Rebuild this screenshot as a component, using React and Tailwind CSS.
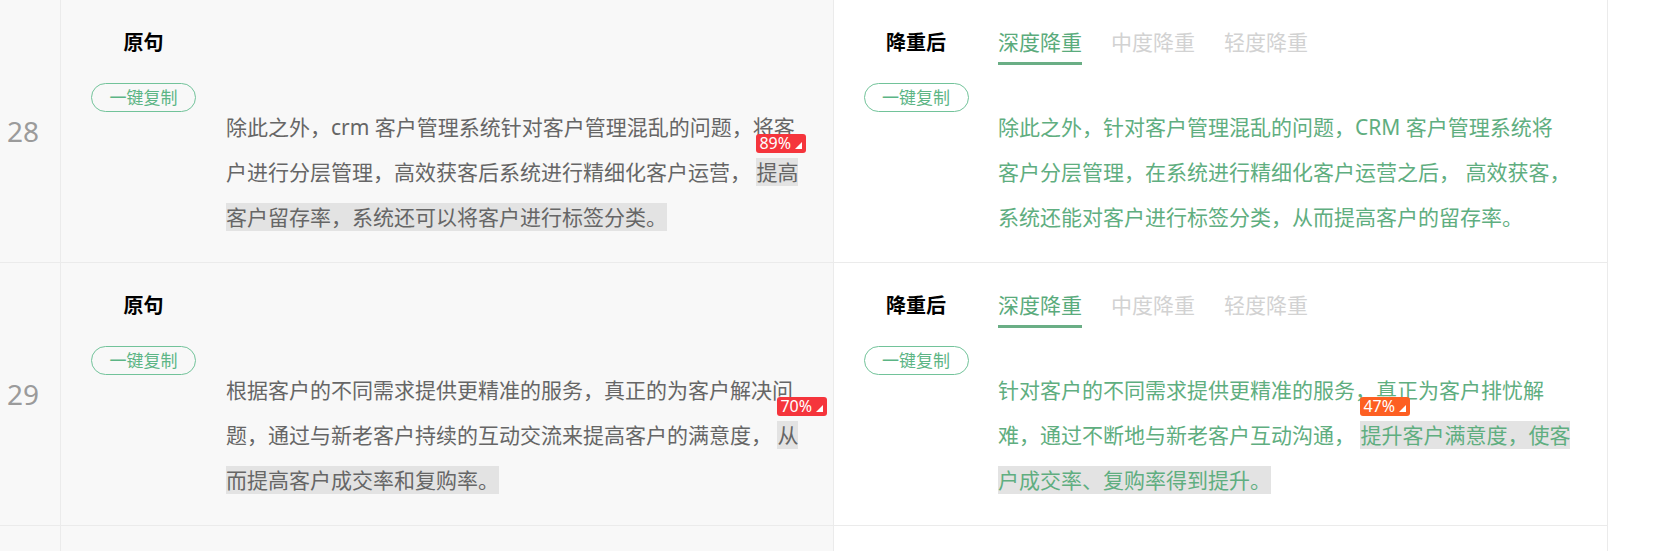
import React from "react";

const FONT = "font-['Noto_Sans','Noto_Sans_CJK_SC',sans-serif]";

function Badge({ value, color }) {
  return (
    <span
      className={`absolute left-0 bottom-full mb-[5px] flex h-[19px] w-[50px] items-center rounded-[3px] pl-[3px] text-[16px] leading-[19px] text-white ${color}`}
    >
      {value}
      <svg
        className="absolute right-[4px] bottom-[4px]"
        width="7"
        height="7"
        viewBox="0 0 7 7"
      >
        <polygon points="7,0 7,7 0,7" fill="white" />
      </svg>
    </span>
  );
}

function Hl({ children, badge }) {
  return (
    <span className="relative bg-[#e3e3e3]">
      {badge}
      {children}
    </span>
  );
}

function CopyButton() {
  return (
    <button className="mt-[26px] flex h-[29px] w-[105px] items-center justify-center rounded-full border border-[#72c39a] text-[17px] leading-none text-[#5cb585]">
      一键复制
    </button>
  );
}

function Tabs() {
  const tabs = ["深度降重", "中度降重", "轻度降重"];
  return (
    <div className="flex gap-[29px]">
      {tabs.map((t, i) => (
        <div key={t} className="flex flex-col">
          <span
            className={`h-[29px] text-[21px] leading-[29px] ${
              i === 0 ? "text-[#5aab7c]" : "text-[#d2d2d2]"
            }`}
          >
            {t}
          </span>
          <span
            className={`mt-[5px] h-[3px] w-full ${
              i === 0 ? "bg-[#6aae85]" : "bg-transparent"
            }`}
          />
        </div>
      ))}
    </div>
  );
}

function Row({ num, left, right, empty }) {
  return (
    <div className="flex h-[263px] w-[1608px] border-b border-[#ebebeb]">
      <div className="flex w-[61px] items-center border-r border-[#ebebeb] bg-[#f8f8f8] pl-[7px] text-[28px] text-[#9b9b9b]">
        {num}
      </div>
      <div className="flex w-[773px] border-r border-[#ebebeb] bg-[#f8f8f8] pt-[28px]">
        {!empty && (
          <>
            <div className="flex w-[165px] flex-col items-center">
              <div className="h-[29px] text-[20px] font-bold leading-[29px] text-black">原句</div>
              <CopyButton />
            </div>
            <div className="flex flex-col">
              <div className="h-[37px]" />
              <div className="mt-[40px] text-[21px] leading-[45px] text-[#666666]">
                {left}
              </div>
            </div>
          </>
        )}
      </div>
      <div className="flex w-[774px] border-r border-[#ebebeb] bg-white pt-[28px]">
        {!empty && (
          <>
            <div className="flex w-[164px] flex-col items-center">
              <div className="h-[29px] text-[20px] font-bold leading-[29px] text-black">降重后</div>
              <CopyButton />
            </div>
            <div className="flex flex-col">
              <div className="h-[37px]">
                <Tabs />
              </div>
              <div className="mt-[40px] text-[21px] leading-[45px] text-[#5fae80]">
                {right}
              </div>
            </div>
          </>
        )}
      </div>
    </div>
  );
}

function Line({ children }) {
  return <div className="whitespace-pre">{children}</div>;
}

export default function App() {
  return (
    <div className={`min-h-[551px] w-full bg-white ${FONT}`}>
      <Row
        num="28"
        left={
          <>
            <Line>除此之外，crm 客户管理系统针对客户管理混乱的问题，将客</Line>
            <Line>
              户进行分层管理，高效获客后系统进行精细化客户运营，{" "}
              <Hl badge={<Badge value="89%" color="bg-[#f5353c]" />}>提高</Hl>
            </Line>
            <Line>
              <Hl>客户留存率，系统还可以将客户进行标签分类。</Hl>
            </Line>
          </>
        }
        right={
          <>
            <Line>除此之外，针对客户管理混乱的问题，CRM 客户管理系统将</Line>
            <Line>客户分层管理，在系统进行精细化客户运营之后， 高效获客，</Line>
            <Line>系统还能对客户进行标签分类，从而提高客户的留存率。</Line>
          </>
        }
      />
      <Row
        num="29"
        left={
          <>
            <Line>根据客户的不同需求提供更精准的服务，真正的为客户解决问</Line>
            <Line>
              题，通过与新老客户持续的互动交流来提高客户的满意度，{" "}
              <Hl badge={<Badge value="70%" color="bg-[#f5353c]" />}>从</Hl>
            </Line>
            <Line>
              <Hl>而提高客户成交率和复购率。</Hl>
            </Line>
          </>
        }
        right={
          <>
            <Line>针对客户的不同需求提供更精准的服务，真正为客户排忧解</Line>
            <Line>
              难，通过不断地与新老客户互动沟通，{" "}
              <Hl badge={<Badge value="47%" color="bg-[#fd5f22]" />}>提升客户满意度，使客</Hl>
            </Line>
            <Line>
              <Hl>户成交率、复购率得到提升。</Hl>
            </Line>
          </>
        }
      />
      <Row num="" empty />
    </div>
  );
}
